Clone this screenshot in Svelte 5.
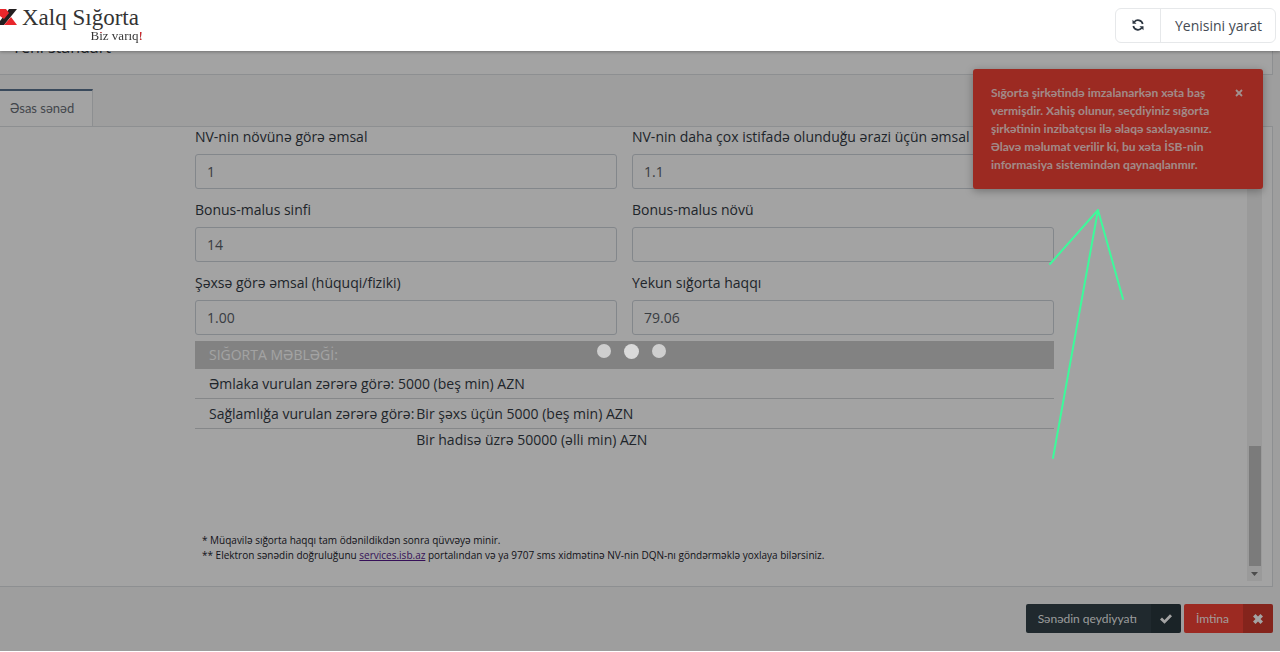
<script lang="ts">
  const fields = [
    { id: 'type', label: 'NV-nin növünə görə əmsal', value: '1' },
    { id: 'area', label: 'NV-nin daha çox istifadə olunduğu ərazi üçün əmsal', value: '1.1' },
    { id: 'bonus-class', label: 'Bonus-malus sinfi', value: '14' },
    { id: 'bonus-type', label: 'Bonus-malus növü', value: '' },
    { id: 'person', label: 'Şəxsə görə əmsal (hüquqi/fiziki)', value: '1.00' },
    { id: 'total', label: 'Yekun sığorta haqqı', value: '79.06' }
  ];

  let toastOpen = true;
  let loading = true;
</script>

<header>
  <a class="logo" href="/" aria-label="Xalq Sığorta">
    <svg class="mark" viewBox="0 0 18 16" width="18" height="16">
      <path d="M9 0h8L4 16H0v-4z" fill="#231f20" />
      <path d="M0 0h6l3 4-5 6-4-3z" fill="#e8262b" />
      <path d="M11 8l6 8H4z" fill="#e8262b" />
    </svg>
    <span class="brand">
      <span class="name">Xalq Sığorta</span>
      <span class="slogan">Biz varıq!</span>
    </span>
  </a>
  <div class="tools">
    <button class="refresh" aria-label="Yenilə">
      <svg viewBox="0 0 12 12" width="12" height="12" fill="none" stroke="#2c3540" stroke-width="1.7">
        <path d="M10.700 5A4.800 4.800 0 0 0 2.300 3" />
        <path d="M1.300 7A4.800 4.800 0 0 0 9.700 9" />
        <path d="M.5.800v4h4zM11.500 11.200v-4h-4z" fill="#2c3540" stroke="none" />
      </svg>
    </button>
    <button class="create">Yenisini yarat</button>
  </div>
</header>

<main>
  <div class="title"><h1>Yeni standart</h1></div>

  <nav><a class="tab" href="#main">Əsas sənəd</a></nav>

  <section class="panel">
    <div class="content">
      <div class="form">
        {#each fields as f}
          <div class="field">
            <label for={f.id}>{f.label}</label>
            <input id={f.id} type="text" bind:value={f.value} />
          </div>
        {/each}
      </div>

      <table>
        <thead>
          <tr><th colspan="2">SIĞORTA MƏBLƏĞİ:</th></tr>
        </thead>
        <tbody>
          <tr><td colspan="2">Əmlaka vurulan zərərə görə: 5000 (beş min) AZN</td></tr>
          <tr>
            <td class="key">Sağlamlığa vurulan zərərə görə:</td>
            <td class="val">Bir şəxs üçün 5000 (beş min) AZN</td>
          </tr>
          <tr class="last">
            <td></td>
            <td class="val">Bir hadisə üzrə 50000 (əlli min) AZN</td>
          </tr>
        </tbody>
      </table>

      <div class="notes">
        <p>* Müqavilə sığorta haqqı tam ödənildikdən sonra qüvvəyə minir.</p>
        <p>** Elektron sənədin doğruluğunu <a href="#services">services.isb.az</a> portalından və ya 9707 sms xidmətinə NV-nin DQN-nı göndərməklə yoxlaya bilərsiniz.</p>
      </div>
    </div>
    <div class="scrollbar">
      <div class="thumb"></div>
      <svg viewBox="0 0 15 15" width="15" height="15"><path d="M4 6h7l-3.500 4z" fill="#777" /></svg>
    </div>
  </section>

  <footer>
    <button class="action save">
      <span>Sənədin qeydiyyatı</span>
      <b><svg viewBox="0 0 12 12" width="12" height="12"><path d="M0 6.500l2-2 2.500 2.400L10 1.300l2 2-7.500 7.400z" fill="#fff" /></svg></b>
    </button>
    <button class="action cancel">
      <span>İmtina</span>
      <b><svg viewBox="0 0 12 12" width="10" height="10"><path d="M3 0l3 3 3-3 3 3-3 3 3 3-3 3-3-3-3 3-3-3 3-3-3-3z" fill="#fff" /></svg></b>
    </button>
  </footer>

  {#if toastOpen}
    <div class="toast" role="alert">
      <p>Sığorta şirkətində imzalanarkən xəta baş vermişdir. Xahiş olunur, seçdiyiniz sığorta şirkətinin inzibatçısı ilə əlaqə saxlayasınız. Əlavə məlumat verilir ki, bu xəta İSB-nin informasiya sistemindən qaynaqlanmır.</p>
      <button aria-label="Bağla" on:click={() => (toastOpen = false)}>
        <svg viewBox="0 0 8 8" width="8" height="8"><path d="M1 1l6 6M7 1L1 7" stroke="#fff" stroke-opacity=".85" stroke-width="1.800" /></svg>
      </button>
    </div>
  {/if}

  {#if loading}
    <div class="overlay">
      <i></i><i class="mid"></i><i></i>
    </div>
  {/if}

  <svg class="arrow" viewBox="0 0 80 256" width="80" height="256" fill="none" stroke="#3dfa9b" stroke-width="2" stroke-linecap="round">
    <path d="M5 252L50 4M50 4L2 58M50 4L75 93" />
  </svg>
</main>

<style>
  :global(body) {
    margin: 0;
    background: #fff;
    font-family: 'Open Sans', 'Noto Sans', sans-serif;
    color: #333a44;
  }

  button {
    font-family: inherit;
    border: 0;
    padding: 0;
    cursor: pointer;
  }

  header {
    position: relative;
    z-index: 5;
    display: flex;
    justify-content: space-between;
    align-items: center;
    box-sizing: border-box;
    height: 51px;
    padding-right: 4px;
    background: #fff;
    box-shadow: 0 1px 3px rgba(0, 0, 0, 0.3);
  }

  .logo {
    display: flex;
    gap: 4px;
    text-decoration: none;
    color: #333;
    font-family: 'Liberation Serif', serif;
  }

  .mark {
    margin-top: 1px;
  }

  .brand {
    display: flex;
    flex-direction: column;
  }

  .name {
    font-size: 23px;
    line-height: 20px;
  }

  /* red i-dot and exclamation mark */
  .slogan {
    align-self: flex-end;
    margin-right: -4px;
    font-size: 13px;
    line-height: 16px;
    color: transparent;
    background:
      linear-gradient(#e0262b, #e0262b) 9px 0 / 4px 5px no-repeat,
      linear-gradient(#e0262b, #e0262b) 100% 0 / 4px 100% no-repeat,
      #333;
    -webkit-background-clip: text;
    background-clip: text;
  }

  .tools {
    display: flex;
    box-sizing: border-box;
    height: 35px;
    border: 1px solid #e6e8ea;
    border-radius: 6px;
  }

  .tools button {
    background: none;
    font-size: 14px;
    color: #444b54;
  }

  .refresh {
    width: 44px;
  }

  .tools .create {
    padding: 0 13px 0 14px;
    border-left: 1px solid #e6e8ea;
  }

  main {
    position: relative;
    background: #f7f7f7;
  }

  .title {
    display: flex;
    align-items: flex-start;
    box-sizing: border-box;
    height: 24px;
    margin-right: 7px;
    padding-left: 12px;
    background: #fff;
    border: solid #dde0e3;
    border-width: 0 1px 1px 0;
  }

  h1 {
    margin: -14px 0 0;
    font-size: 16px;
    line-height: 20px;
    font-weight: 500;
  }

  nav {
    display: flex;
    margin-top: 14px;
    margin-right: 7px;
    border-bottom: 1px solid #dde0e3;
  }

  .tab {
    padding: 0 18px 0 10px;
    border-top: 2px solid #5b7490;
    border-right: 1px solid #dde0e3;
    background: #fff;
    font-family: Lato, sans-serif;
    font-size: 13px;
    line-height: 35px;
    color: #6a7078;
    text-decoration: none;
  }

  .panel {
    display: flex;
    margin-right: 7px;
    padding: 0 10px 5px 2px;
    background: #fff;
    border: solid #dde0e3;
    border-width: 0 1px 1px 0;
  }

  .content {
    flex: 1;
  }

  .form,
  table,
  .notes {
    width: 69%;
    margin: 0 auto;
  }

  .form {
    display: grid;
    grid-template-columns: 1fr 1fr;
    gap: 11px 15px;
  }

  .field {
    display: flex;
    flex-direction: column;
    gap: 7px;
  }

  label {
    font-size: 14px;
    line-height: 20px;
    white-space: nowrap;
  }

  input {
    box-sizing: border-box;
    height: 35px;
    padding: 0 11px;
    border: 1px solid #cdd3da;
    border-radius: 3px;
    background: #fff;
    font: 14px 'Open Sans', 'Noto Sans', sans-serif;
    color: #5a6068;
  }

  table {
    margin-top: 6px;
    border-collapse: collapse;
    font-size: 14px;
    line-height: 20px;
  }

  th {
    height: 28px;
    padding: 0 14px;
    background: #ccc;
    color: #fff;
    font-weight: 400;
    text-align: left;
  }

  td {
    height: 29px;
    padding: 0 14px;
    border-bottom: 1px solid #d0d3d6;
    white-space: nowrap;
  }

  .key {
    width: 1px;
    padding-right: 2px;
  }

  .val {
    padding-left: 0;
  }

  .last td {
    height: 22px;
    border: 0;
  }

  .notes {
    padding: 82px 0 18px;
  }

  .notes p {
    margin: 0 7px;
    font-size: 10px;
    line-height: 15px;
    color: #1c1c2c;
  }

  .notes a {
    color: #551a8b;
  }

  .scrollbar {
    display: flex;
    flex-direction: column;
    align-items: center;
    justify-content: flex-end;
    width: 15px;
    background: #f1f1f1;
  }

  .thumb {
    width: 12px;
    height: 120px;
    background: #c1c1c1;
  }

  footer {
    display: flex;
    justify-content: flex-end;
    gap: 3px;
    padding: 17px 7px 18px;
  }

  .action {
    display: flex;
    height: 29px;
    border-radius: 2px;
    overflow: hidden;
    font-family: Lato, sans-serif;
    font-size: 12px;
    line-height: 29px;
    color: rgba(255, 255, 255, 0.95);
  }

  .action span {
    padding: 0 14px 0 12px;
  }

  .action b {
    display: flex;
    align-items: center;
    justify-content: center;
    width: 30px;
    height: 29px;
    background: rgba(0, 0, 0, 0.15);
  }

  .save {
    background: #324148;
  }

  .cancel {
    background: #f44336;
  }

  .toast {
    position: absolute;
    top: 18px;
    right: 17px;
    display: flex;
    align-items: flex-start;
    gap: 14px;
    box-sizing: border-box;
    width: 290px;
    padding: 15px 20px 15px 18px;
    background: #f44336;
    border-radius: 3px;
    box-shadow: 0 2px 8px rgba(0, 0, 0, 0.3);
  }

  .toast p {
    flex: 1;
    margin: 0;
    font-family: Lato, sans-serif;
    font-size: 12px;
    line-height: 18px;
    font-weight: 700;
    color: rgba(255, 255, 255, 0.8);
  }

  .toast button {
    display: flex;
    padding-top: 5px;
    background: none;
  }

  .overlay {
    position: absolute;
    inset: 0;
    display: flex;
    align-items: center;
    justify-content: center;
    gap: 13px;
    padding-right: 17px;
    background: rgba(0, 0, 0, 0.36);
  }

  .overlay i {
    width: 14px;
    height: 14px;
    border-radius: 50%;
    background: #cecece;
  }

  .overlay .mid {
    width: 15px;
    height: 15px;
    background: #dadada;
  }

  .arrow {
    position: absolute;
    top: 155px;
    right: 152px;
    pointer-events: none;
  }
</style>
